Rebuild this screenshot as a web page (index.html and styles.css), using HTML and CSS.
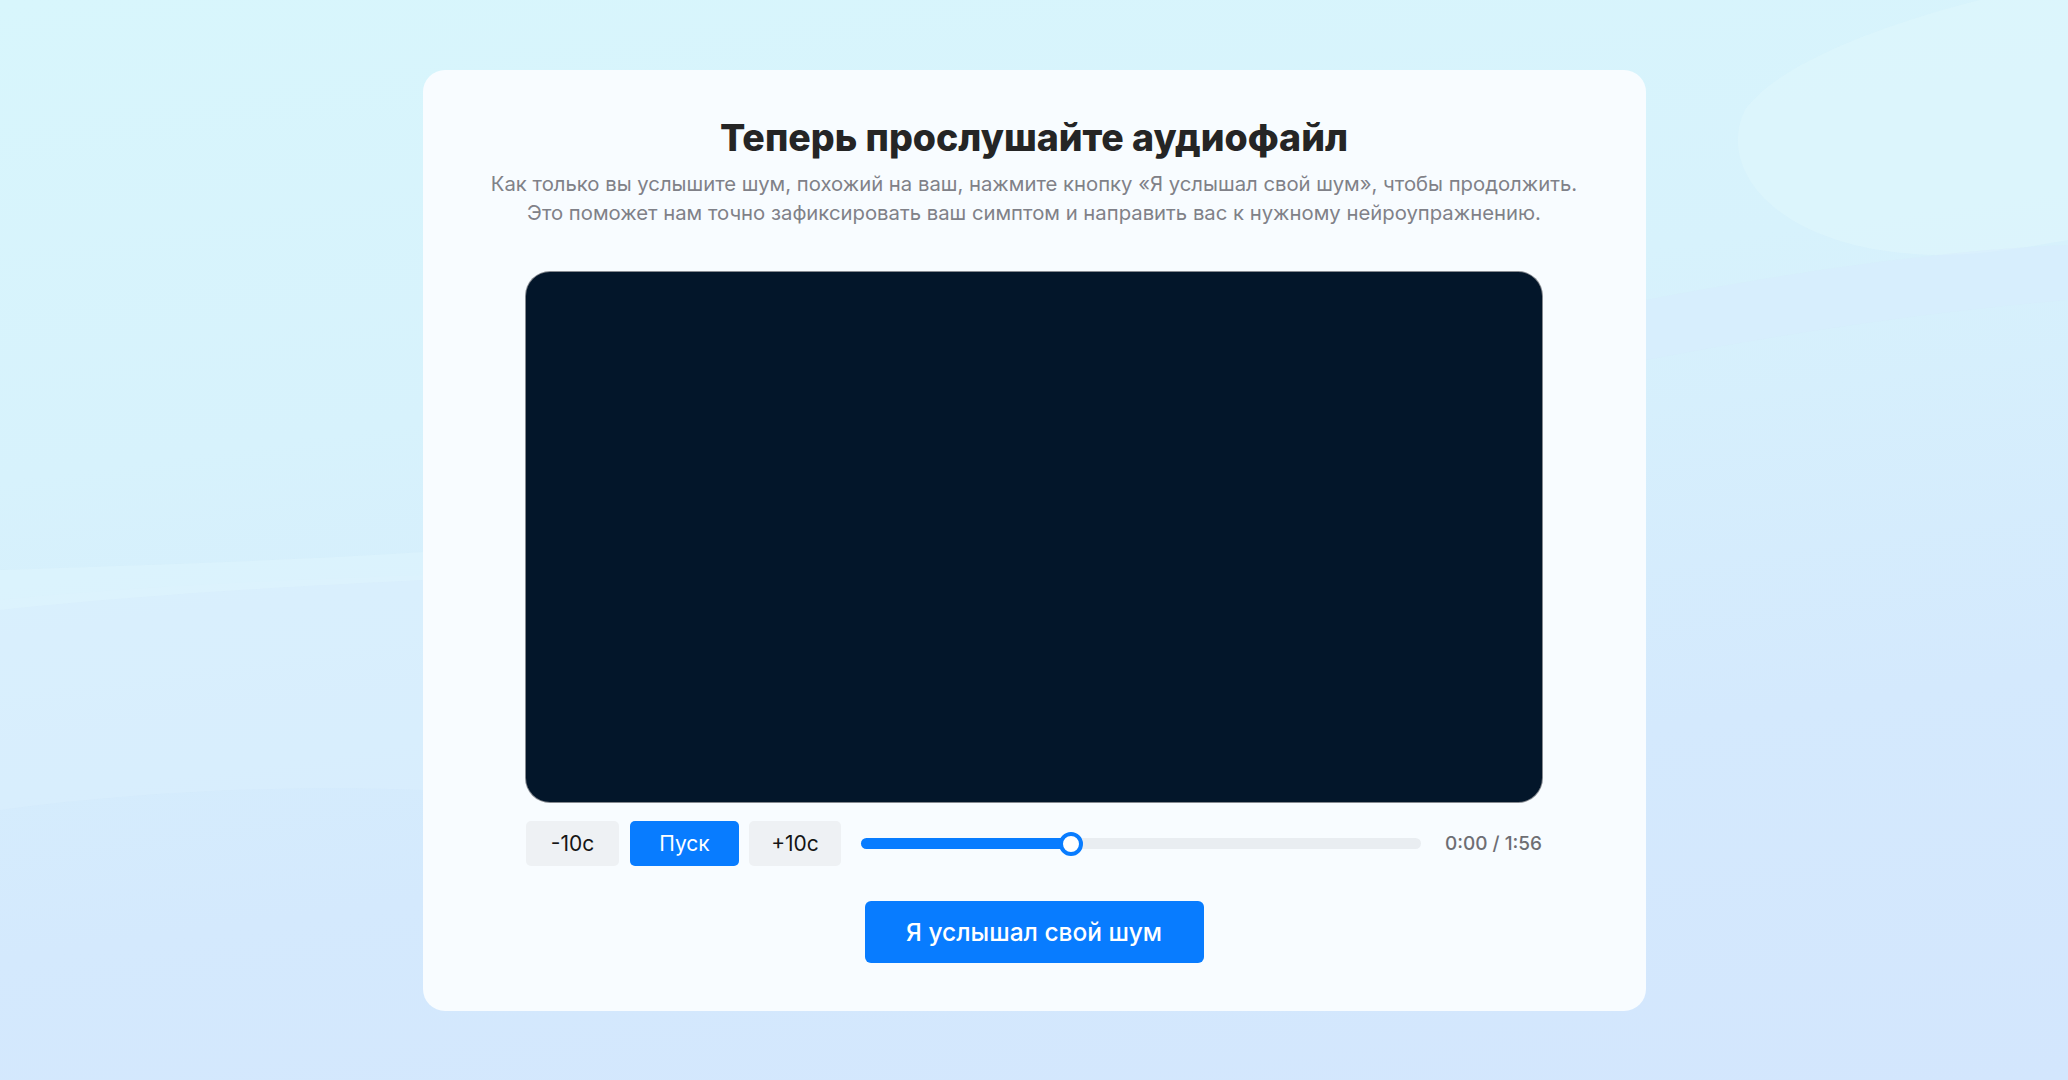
FILE: index.html
```html
<!DOCTYPE html>
<html lang="ru">
<head>
<meta charset="utf-8">
<title>Теперь прослушайте аудиофайл</title>
<link rel="stylesheet" href="styles.css">
</head>
<body>
<svg class="bg-waves" viewBox="0 0 2068 1080" preserveAspectRatio="none" aria-hidden="true">
  <path d="M1980 0 C1900 20 1780 60 1745 110 C1720 160 1760 230 1880 250 C1950 262 2010 250 2068 240 L2068 0 Z" fill="#dff6fc" opacity="0.6"/>
  <path d="M1646 300 C1800 270 1950 250 2068 245 L2068 300 C1950 310 1800 330 1646 360 Z" fill="#d8ebfd" opacity="0.5"/>
  <path d="M0 600 C150 585 300 580 423 575 L423 790 C300 785 150 790 0 810 Z" fill="#dcf0fd" opacity="0.5"/>
  <path d="M0 570 C150 565 300 560 423 552 L423 580 C300 586 150 594 0 610 Z" fill="#e0f6fd" opacity="0.5"/>
</svg>
<main class="card">
  <h1 class="title">Теперь прослушайте аудиофайл</h1>
  <p class="subtitle">Как только вы услышите шум, похожий на ваш, нажмите кнопку «Я услышал свой шум», чтобы продолжить.<br>Это поможет нам точно зафиксировать ваш симптом и направить вас к нужному нейроупражнению.</p>
  <div class="video"></div>
  <div class="controls">
    <button class="ctrl">-10с</button>
    <button class="ctrl ctrl-primary">Пуск</button>
    <button class="ctrl ctrl-last">+10с</button>
    <div class="slider">
      <div class="slider-fill" style="width: 37.5%"></div>
      <div class="slider-thumb" style="left: 37.5%"></div>
    </div>
    <span class="time">0:00 / 1:56</span>
  </div>
  <button class="confirm">Я услышал свой шум</button>
</main>
</body>
</html>
```
FILE: styles.css
```css
* { box-sizing: border-box; }
html, body { margin: 0; padding: 0; }
body {
  width: 2068px;
  height: 1080px;
  overflow: hidden;
  position: relative;
  display: flex;
  align-items: center;
  justify-content: center;
  background: linear-gradient(172deg, #d8f6fc 0%, #d7f2fc 35%, #d4e9fd 70%, #d3e6fd 100%);
  font-family: Inter, "Noto Sans", sans-serif;
}
.bg-waves {
  position: absolute;
  inset: 0;
  width: 100%;
  height: 100%;
  z-index: 0;
}
.card {
  position: relative;
  z-index: 1;
  width: 1223px;
  height: 941px;
  background: #f8fcff;
  border-radius: 22px;
  padding: 46px 103px 0;
  display: flex;
  flex-direction: column;
  align-items: center;
}
.card > * { flex: none; }
.title {
  margin: 0;
  font-family: Inter, "Noto Sans", sans-serif;
  font-weight: 800;
  font-size: 37.5px;
  line-height: 43px;
  color: #252525;
  text-align: center;
}
.subtitle {
  margin: 10px -60px 0;
  font-size: 20.3px;
  line-height: 29px;
  color: #808188;
  text-align: center;
  white-space: nowrap;
}
.video {
  margin-top: 45px;
  width: 1016px;
  height: 530px;
  background: #03162a;
  border-radius: 24px;
  box-shadow: 0 0 0 1px rgba(40, 44, 52, 0.55);
}
.controls {
  margin-top: 19px;
  width: 1016px;
  height: 46px;
  display: flex;
  align-items: center;
}
.ctrl {
  flex: none;
  height: 45px;
  border: none;
  border-radius: 5px;
  background: #eef1f4;
  color: #151515;
  font-family: Inter, "Noto Sans", sans-serif;
  font-size: 21px;
  padding: 0;
  width: 93px;
  margin-right: 11px;
}
.ctrl-primary {
  width: 109px;
  background: #087cff;
  color: #ffffff;
  margin-right: 10px;
}
.ctrl-last {
  width: 92px;
  margin-right: 20px;
}
.slider {
  flex: none;
  position: relative;
  width: 560px;
  height: 11px;
  border-radius: 6px;
  background: #e9edf1;
}
.slider-fill {
  height: 100%;
  border-radius: 6px;
  background: #087cff;
}
.slider-thumb {
  position: absolute;
  top: 50%;
  width: 24px;
  height: 24px;
  margin-left: -12px;
  margin-top: -12px;
  border-radius: 50%;
  background: #ffffff;
  border: 4px solid #087cff;
}
.time {
  margin-left: auto;
  font-size: 19px;
  font-weight: 500;
  color: #6e6e73;
}
.confirm {
  margin-top: 34px;
  width: 339px;
  height: 62px;
  border: none;
  border-radius: 6px;
  background: #087cff;
  color: #ffffff;
  font-family: Inter, "Noto Sans", sans-serif;
  font-size: 24.5px;
  font-weight: 500;
  padding: 0;
}
```
